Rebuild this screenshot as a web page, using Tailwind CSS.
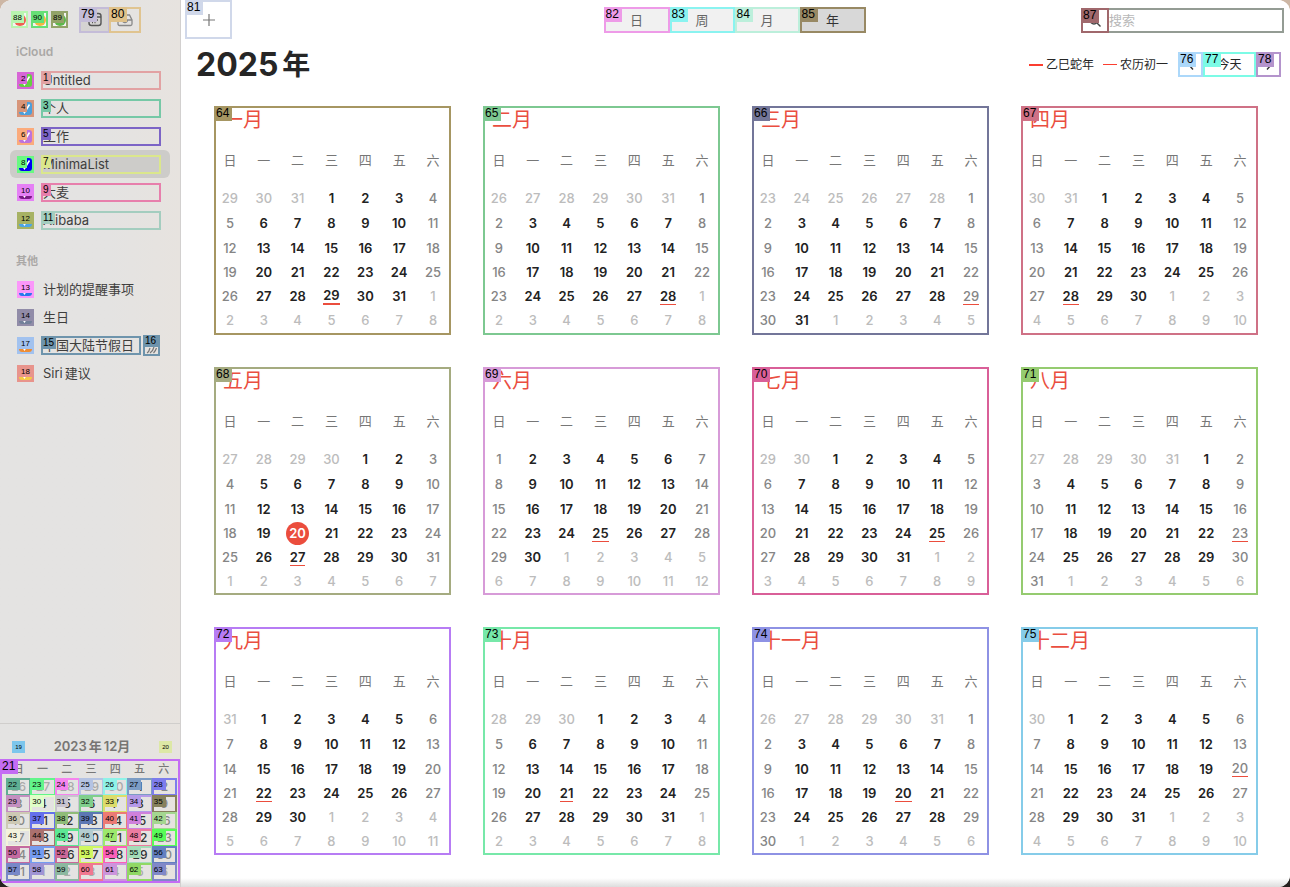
<!DOCTYPE html>
<html lang="zh-CN">
<head>
<meta charset="utf-8">
<title>日历 2025年</title>
<script src="https://cdn.jsdelivr.net/npm/@tailwindcss/browser@4"></script>
</head>
<body class="min-h-screen bg-linear-to-b from-[#cdb7a5] from-50% to-[#26211e] to-50% font-['Inter','Noto_Sans_CJK_SC',sans-serif] text-[13px] text-[#262626]">
<div class="flex min-h-screen overflow-hidden rounded-xl bg-white">

  <aside class="flex w-[181px] shrink-0 flex-col border-r border-[#d2d0cf] bg-linear-to-r from-[#e4e3e2] from-60% to-[#e7e3df]">
    <div class="flex items-start pt-[7px] pl-[11px]">
      <div id="lights" class="flex gap-[3px] pt-1"></div>
      <button aria-label="日历列表" class="relative ml-[11px] flex h-[26px] w-[31px] items-center justify-center border-2 border-[#c4bcd8] bg-[#d5d3d2]">
        <svg class="h-4 w-4" viewBox="0 0 16 16" fill="none" stroke="#555" stroke-width="1.4"><rect x="2" y="1.500" width="12" height="12" rx="2.500"/><path d="M2 5h12M5 8h1M7.500 8h1M10 8h1M5 10.500h1M7.500 10.500h1"/></svg>
        <span class="absolute -top-0.5 -left-0.5 bg-[#c4bcd8] pr-[3px] pl-0.5 text-[12px] leading-[15px] text-black font-['Liberation_Sans',sans-serif]">79</span>
      </button>
      <button aria-label="收件箱" class="relative -ml-px flex h-[26px] w-8 items-center justify-center border-2 border-[#e0c490]">
        <svg class="h-4 w-4" viewBox="0 0 16 16" fill="none" stroke="#888" stroke-width="1.300"><path d="M1 8l2.500-5h9L15 8v4a1.500 1.500 0 0 1-1.500 1.500h-11A1.500 1.500 0 0 1 1 12zM1 8h4.500a2.500 2.500 0 0 0 5 0H15"/></svg>
        <span class="absolute -top-0.5 -left-0.5 bg-[#dfc189] pr-[3px] pl-0.5 text-[12px] leading-[15px] text-black font-['Liberation_Sans',sans-serif]">80</span>
      </button>
    </div>
    <h2 class="mt-2.5 pl-4 text-[12px] leading-[18px] font-semibold text-[#aaa8a6]">iCloud</h2>
    <ul id="icloud" class="mt-[5px] px-2.5"></ul>
    <h2 class="mt-[18px] pl-4 text-[11px] leading-[18px] font-bold text-[#aaa8a6]">其他</h2>
    <ul id="others" class="mt-[5px] px-2.5"></ul>

    <div class="mt-auto border-t border-[#d0cecc] pb-1">
      <div class="flex h-[35px] items-center justify-between px-2 pt-2.5 pl-3">
        <button aria-label="上个月" class="h-3 w-[13px] bg-[#7cc6ec] text-[6px] leading-3 text-black font-['Liberation_Sans',sans-serif]">19</button>
        <span class="flex font-semibold text-[#777573]"><span class="mr-0.5">2023</span><span class="mr-0.5">年</span><span>12</span><span>月</span></span>
        <button aria-label="下个月" class="h-3 w-[13px] bg-[#dde8a6] text-[6px] leading-3 text-black font-['Liberation_Sans',sans-serif]">20</button>
      </div>
      <div class="relative border-2 border-[#c46cf4] pr-0.5 pb-px pl-1">
        <table class="w-full table-fixed border-collapse text-[12px]">
          <thead><tr id="miniHead" class="h-[17px] text-[11px] leading-[17px] text-[#777]"></tr></thead>
          <tbody id="mini"></tbody>
        </table>
        <span class="absolute -top-0.5 -left-0.5 bg-[#c46cf4] pr-[3px] pl-0.5 text-[12px] leading-[15px] text-black font-['Liberation_Sans',sans-serif]">21</span>
      </div>
    </div>
  </aside>

  <main class="flex min-w-0 flex-1 flex-col bg-linear-to-b from-white from-99% to-[#dddddd]">
    <div class="grid h-[39px] grid-cols-[1fr_auto_1fr] items-start pr-1.5 pl-1">
      <button aria-label="新建日程" class="relative flex h-[39px] w-[47px] items-center justify-center border-2 border-[#d0d8ea]">
        <svg class="h-3 w-3" viewBox="0 0 12 12" stroke="#777" stroke-width="1.200"><path d="M6 0v12M0 6h12"/></svg>
        <span class="absolute -top-0.5 -left-0.5 bg-[#d0d8ea] pr-[3px] pl-0.5 text-[12px] leading-[15px] text-black font-['Liberation_Sans',sans-serif]">81</span>
      </button>
      <div id="views" class="mt-[7px] flex"></div>
      <label class="relative mt-2 flex h-[25px] w-[203px] items-center justify-self-end border-2 border-[#949c94] bg-white">
        <span class="relative -my-0.5 -ml-0.5 flex h-[25px] w-7 shrink-0 items-center justify-center border-2 border-[#a0686c]">
          <svg class="h-3.5 w-3.5" viewBox="0 0 14 14" fill="none" stroke="#444" stroke-width="1.400"><circle cx="6" cy="6" r="4"/><path d="M9 9l3.500 3.500"/></svg>
          <span class="absolute -top-0.5 -left-0.5 bg-[#a0686c] pr-[3px] pl-0.5 text-[12px] leading-[15px] text-black font-['Liberation_Sans',sans-serif]">87</span>
        </span>
        <input type="search" aria-label="搜索" placeholder="搜索" class="min-w-0 flex-1 bg-transparent text-[13px] outline-none placeholder:text-[#b8b8b8]">
      </label>
    </div>

    <header class="flex h-[51px] items-center justify-between pr-[9px] pl-[15px]">
      <h1 class="flex gap-1 text-[32px] leading-[50px] font-bold"><span>2025</span><span class="text-[28px]">年</span></h1>
      <div class="flex items-center text-[12px]">
        <span class="mr-[3px] h-0.5 w-3.5 bg-[#fb3e30]"></span><span>乙巳蛇年</span>
        <span class="mr-[3px] ml-[9px] h-px w-3.5 bg-[#fb3e30]"></span><span class="mr-2.5">农历初一</span>
        <button aria-label="上一年" class="relative flex h-[25px] w-[25px] items-center justify-center border-2 border-[#acd8fa]">
          <svg class="h-3 w-2" viewBox="0 0 8 12" fill="none" stroke="#333" stroke-width="1.400"><path d="M6 1.500L2 6l4 4.500"/></svg>
          <span class="absolute -top-0.5 -left-0.5 bg-[#acd8fa] pr-[3px] pl-0.5 text-[12px] leading-[15px] text-black font-['Liberation_Sans',sans-serif]">76</span>
        </button>
        <button class="relative h-[25px] w-[53px] border-2 border-[#7cfbe6] text-[12px] leading-[21px]">今天
          <span class="absolute -top-0.5 -left-0.5 bg-[#7cfbe6] pr-[3px] pl-0.5 text-[12px] leading-[15px] text-black font-['Liberation_Sans',sans-serif]">77</span>
        </button>
        <button aria-label="下一年" class="relative flex h-[25px] w-[25px] items-center justify-center border-2 border-[#b494cc]">
          <svg class="h-3 w-2" viewBox="0 0 8 12" fill="none" stroke="#333" stroke-width="1.400"><path d="M2 1.500L6 6l-4 4.500"/></svg>
          <span class="absolute -top-0.5 -left-0.5 bg-[#b494cc] pr-[3px] pl-0.5 text-[12px] leading-[15px] text-black font-['Liberation_Sans',sans-serif]">78</span>
        </button>
      </div>
    </header>

    <div id="year" class="mt-4 grid grid-cols-4 grid-rows-[minmax(229px,auto)_minmax(228px,auto)_minmax(228px,auto)] gap-8 pr-8 pl-[33px]"></div>
  </main>
</div>

<script>
const week = ['日','一','二','三','四','五','六'];
const $ = id => document.getElementById(id);

$('lights').innerHTML = [
  ['88','关闭','#b8f5b0','#ef6150'], ['90','最小化','#66df76','#f3b63f'], ['89','缩放','#92a368','#5cb84a']
].map(([n, name, c, dot]) => `<button aria-label="${name}" class="relative flex h-[17px] w-[17px] items-center justify-center border-2 bg-[#f4f3f2]" style="border-color:${c}">
  <span class="h-3 w-3 rounded-full" style="background:${dot}"></span>
  <span class="absolute top-0 left-0 pr-0.5 text-[8px] leading-[10px] text-black font-['Liberation_Sans',sans-serif]" style="background:${c}">${n}</span></button>`).join('');

// [icon tag, icon tag colour, tick box colour, name, name tag, name tag colour, selected]
const row = ([n, c, fill, name, ln, lc, sel]) => {
  const id = 'cal' + n;
  return `<li class="flex h-7 items-center rounded-md pl-[7px] ${sel ? 'bg-[#cdccc9]' : ''}">
  <span class="relative h-[17px] w-[17px] shrink-0 border-2" style="border-color:${c};background:${c}">
    <input type="checkbox" checked id="${id}" class="block h-[13px] w-[13px] appearance-none rounded-[3px]" style="background:${fill}">
    <svg class="pointer-events-none absolute top-0 left-0 h-[13px] w-[13px]" viewBox="0 0 13 13" fill="none" stroke="#fff" stroke-width="1.600"><path d="M3 7l2.500 3.500L10.500 2.500"/></svg>
    <span class="absolute top-0 left-0 px-0.5 text-[8px] leading-[10px] text-black font-['Liberation_Sans',sans-serif]" style="background:${c}">${n}</span>
  </span>
  <label for="${id}" class="relative ml-[7px] h-[19px] border-2 text-[13px] leading-[15px] whitespace-nowrap text-[#3f3e3d] ${n === '17' ? 'w-[100px]' : 'w-[120px]'} ${ln ? '' : 'border-transparent'}" ${ln ? `style="border-color:${lc}"` : ''}>${name}${ln ? `<span class="absolute -top-0.5 -left-0.5 px-0.5 text-[10px] leading-[13px] text-black font-['Liberation_Sans',sans-serif]" style="background:${lc}">${ln}</span>` : ''}</label>
  ${n === '17' ? `<button aria-label="共享" class="relative ml-0.5 flex h-[21px] w-[17px] items-end justify-center border-2 border-[#6e94ac]">
    <svg class="h-3 w-3" viewBox="0 0 12 12" fill="none" stroke="#777" stroke-width="1.200"><path d="M1 11q2-1 3-5M4 11q3-2 4-6M7.500 11q2-2 3-5"/></svg>
    <span class="absolute -top-0.5 -left-0.5 bg-[#6e94ac] pr-1 pl-0.5 text-[10px] leading-[12px] text-black font-['Liberation_Sans',sans-serif]">16</span></button>` : ''}
  </li>`;
};
$('icloud').innerHTML = [
  ['2','#d765d6','#65cf42','Untitled','1','#e2a2a3'],
  ['4','#d7957a','#4c9fdb','个人','3','#76c8a6'],
  ['6','#fbab7c','#bd72dc','工作','5','#7c64c6'],
  ['8','#69f982','#0000f5','MinimaList','7','#dbe78c',true],
  ['10','#e580f5','#7a1a86','大麦','9','#e77fac'],
  ['12','#a7b264','#4da5e8','Alibaba','11','#a4cdbf']
].map(row).join('');
$('others').innerHTML = [
  ['13','#fb97fa','#2a78ec','计划的提醒事项'],
  ['14','#918ca8','#72809a','生日'],
  ['17','#a2c2ef','#ee8d34','中国大陆节假日','15','#6e94ac'],
  ['18','#e8948c','#f6cb45','<span class="mr-0.5">Siri</span>建议']
].map(row).join('');

$('views').innerHTML = [['82','日','#ee9be8'],['83','周','#8af3f0'],['84','月','#bcefdb'],['85','年','#988964']]
  .map(([n, t, c], i) => `<button class="relative h-[26px] border-2 text-[13px] leading-[20px] ${i === 0 || i === 3 ? 'w-[66px]' : 'w-[65px]'} ${i === 3 ? 'bg-[#d8d8d8] text-[#333]' : 'bg-[#f1f1f1] text-[#666]'}" style="border-color:${c}">${t}<span class="absolute -top-0.5 -left-0.5 pr-[3px] pl-0.5 text-[12px] leading-[15px] text-black font-['Liberation_Sans',sans-serif]" style="background:${c}">${n}</span></button>`).join('');

const miniColors = ['#5fae93','#62f58a','#f584ee','#b4c3e3','#8ff2e8','#7c9cc4','#7d7cec',
  '#c48fc0','#e0ffc8','#c8c4cf','#7fcf8c','#dcdc6a','#b59ae8','#86805c',
  '#cdc9b4','#6470ec','#8fbc78','#5c78b4','#ec7a74','#cf80dc','#a4d690',
  '#f3f3dc','#ab706e','#5ce894','#b4cdd0','#9ce86c','#ec7ca0','#58fc58',
  '#c46aa0','#749cf0','#cc6898','#d0f860','#fc60b8','#a4dcb8','#6480c0',
  '#7888c8','#a094d4','#8cb8a0','#f07890','#cc94dc','#90d864','#8088c8'];
$('miniHead').innerHTML = week.map(d => `<th class="p-0 font-medium">${d}</th>`).join('');
const grid = (y, m, cell) => {
  const start = new Date(y, m, 1);
  let html = '';
  for (let r = 0; r < 6; r++) {
    html += '<tr>';
    for (let c = 0; c < 7; c++) {
      const d = new Date(y, m, 1 - start.getDay() + r * 7 + c);
      html += cell(d.getDate(), d.getMonth() === m, c, r);
    }
    html += '</tr>';
  }
  return html;
};
$('mini').innerHTML = grid(2023, 11, (d, inside, c, r) => {
  const i = r * 7 + c, col = miniColors[i];
  const tone = !inside ? 'text-[#aaa]' : c === 0 || c === 6 ? 'text-[#888]' : 'text-[#333]';
  return `<td class="h-[17px] p-0"><button class="relative -mb-px block h-[18px] w-[calc(100%+1px)] border-2 text-center leading-[14px] font-medium ${tone}" style="border-color:${col}">${d}<span class="absolute -top-0.5 -left-0.5 pt-0.5 pr-[3px] pl-0.5 text-[8px] leading-[10px] text-black font-['Liberation_Sans',sans-serif]" style="background:${col}">${i + 22}</span></button></td>`;
});

// [name, frame colour, day of the first lunar date]
const months = [['一月','#a69662',29],['二月','#7dc891',28],['三月','#737699',29],['四月','#cf7186',28],
  ['五月','#a5ab80',27],['六月','#d79bd8',25],['七月','#d95f98',25],['八月','#95cb70',23],
  ['九月','#b77cf4',22],['十月','#77e8a9',21],['十一月','#8e92e4',20],['十二月','#86cce9',20]];
$('year').innerHTML = months.map(([name, col, lunar], m) => `<section class="relative border-2" style="border-color:${col}">
  <h3 class="pt-px pl-[7px] text-[20px] leading-[22px] text-[#ea4e40]">${name}</h3>
  <table class="-ml-[3px] mt-[15px] w-[calc(100%+4px)] table-fixed border-collapse text-center">
    <thead><tr class="h-[39px]">${week.map(d => `<th class="p-0 pb-3 text-[13px] leading-[26px] font-normal text-[#777]">${d}</th>`).join('')}</tr></thead>
    <tbody>${grid(2025, m, (d, inside, c, r) => {
      const today = inside && m === 4 && d === 20;
      const tone = !inside ? 'text-[#bcbcbc] font-medium' : today ? 'text-white font-semibold' : c === 0 || c === 6 ? 'text-[#858585] font-medium' : 'text-[#222] font-semibold';
      const mark = today ? 'inline-block h-[23px] w-[23px] rounded-full bg-[#eb4d3d] leading-[23px]'
        : inside && d === lunar ? (m === 0 ? 'inline-block border-b-2 border-[#eb4d3d] leading-[16px]' : 'inline-block border-b border-[#eb4d3d] leading-[16px]') : '';
      return `<td class="p-0 align-middle leading-[16px] ${r < 3 ? 'h-[25px]' : 'h-6'} ${tone}"><span class="${mark}">${d}</span></td>`;
    })}</tbody>
  </table>
  <span class="absolute -top-0.5 -left-0.5 pr-[3px] pl-0.5 text-[12px] leading-[15px] text-black font-['Liberation_Sans',sans-serif]" style="background:${col}">${m + 64}</span>
</section>`).join('');
</script>
</body>
</html>
